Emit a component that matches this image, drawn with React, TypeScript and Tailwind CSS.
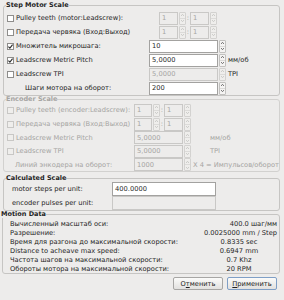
import React from 'react'

const TEXT = 'text-[#1f1f1f]'
const DIM = 'text-[#a5a4a2]'

function Check({ checked, disabled }: { checked?: boolean; disabled?: boolean }) {
  return (
    <span
      className={`w-[7px] h-[7px] border shrink-0 flex items-center justify-center ${
        disabled ? 'border-[#c8c7c5] bg-[#efeeec]' : 'border-[#8e8d8b] bg-white'
      }`}
    >
      {checked && (
        <svg width="5" height="5" viewBox="0 0 5 5">
          <path d="M0.4 2.6 L1.9 4.1 L4.6 0.6" stroke="#2a2a2a" strokeWidth="1.1" fill="none" />
        </svg>
      )}
    </span>
  )
}

function Arrows({ disabled }: { disabled?: boolean }) {
  const c = disabled ? '#c2c1bf' : '#555'
  return (
    <div
      className={`w-[7px] h-full ml-[1px] border rounded-[1px] flex flex-col ${
        disabled ? 'border-[#d3d2d0] bg-[#efeeec]' : 'border-[#c2c1bf] bg-[#f5f4f3]'
      }`}
    >
      <div className="flex-1 flex items-center justify-center">
        <svg width="3" height="2" viewBox="0 0 3 2">
          <path d="M0 2 L1.5 0.3 L3 2" stroke={c} strokeWidth="0.8" fill="none" />
        </svg>
      </div>
      <div className="flex-1 flex items-center justify-center border-t border-[#dcdbd9]">
        <svg width="3" height="2" viewBox="0 0 3 2">
          <path d="M0 0 L1.5 1.7 L3 0" stroke={c} strokeWidth="0.8" fill="none" />
        </svg>
      </div>
    </div>
  )
}

function Spin({ value, disabled, className }: { value: string; disabled?: boolean; className: string }) {
  return (
    <div className={`flex h-[13px] ${className}`}>
      <div
        className={`flex-1 border flex items-center pl-[2px] ${
          disabled ? `border-[#c9c8c6] bg-[#edeceb] ${DIM}` : `border-[#a3a2a0] bg-white ${TEXT}`
        }`}
      >
        {value}
      </div>
      <Arrows disabled={disabled} />
    </div>
  )
}

function Pair({ disabled, a, b, gap }: { disabled?: boolean; a: string; b: string; gap: string }) {
  return (
    <div className="flex items-center">
      <Spin value="1" disabled={disabled} className={a} />
      <span className={`${gap} text-center ${disabled ? DIM : TEXT}`}>:</span>
      <Spin value="1" disabled={disabled} className={b} />
    </div>
  )
}

export default function App() {
  return (
    <div className={`w-[284px] h-[300px] bg-[#edeceb] font-['DejaVu_Sans',sans-serif] text-[6.7px] leading-[8px] ${TEXT} pt-[2px] overflow-hidden`}>
      {/* Step Motor Scale */}
      <fieldset className="ml-[3px] w-[277px] border border-[#c6c5c3] rounded-[3px] pt-[2px]">
        <legend className="ml-[2px] font-bold leading-[7px] text-[6.5px]">Step Motor Scale</legend>
        <div className="flex items-center h-[14px] pl-[3px]">
          <div className="w-[142px] flex items-center gap-[2px]">
            <Check />
            <span>Pulley teeth (motor:Leadscrew):</span>
          </div>
          <div className="w-[78px] flex justify-center">
            <Pair disabled a="w-[27px]" b="w-[27px]" gap="w-[4px]" />
          </div>
        </div>
        <div className="flex items-center h-[14px] pl-[3px]">
          <div className="w-[142px] flex items-center gap-[2px]">
            <Check />
            <span>Передача червяка (Вход:Выход)</span>
          </div>
          <div className="w-[78px] flex justify-center">
            <Pair disabled a="w-[27px]" b="w-[27px]" gap="w-[4px]" />
          </div>
        </div>
        <div className="flex items-center h-[14px] pl-[3px]">
          <div className="w-[142px] flex items-center gap-[2px]">
            <Check checked />
            <span>Множитель микрошага:</span>
          </div>
          <Spin value="10" className="w-[77px]" />
        </div>
        <div className="flex items-center h-[14px] pl-[3px]">
          <div className="w-[142px] flex items-center gap-[2px]">
            <Check checked />
            <span>Leadscrew Metric Pitch</span>
          </div>
          <Spin value="5,0000" className="w-[77px]" />
          <span className="pl-[2px]">мм/об</span>
        </div>
        <div className="flex items-center h-[14px] pl-[3px]">
          <div className="w-[142px] flex items-center gap-[2px]">
            <Check />
            <span>Leadscrew TPI</span>
          </div>
          <Spin value="5,0000" disabled className="w-[77px]" />
          <span className="pl-[2px]">TPI</span>
        </div>
        <div className="flex items-center h-[14px] pl-[3px]">
          <div className="w-[142px] pl-[18px]">Шаги мотора на оборот:</div>
          <Spin value="200" className="w-[77px]" />
        </div>
      </fieldset>

      {/* Encoder Scale */}
      <fieldset className={`ml-[3px] w-[277px] border border-[#d2d1cf] rounded-[3px] ${DIM}`}>
        <legend className="ml-[2px] font-bold leading-[7px] text-[6.5px]">Encoder Scale</legend>
        <div className="flex items-center h-[14px] pl-[3px]">
          <div className="w-[127px] flex items-center gap-[2px]">
            <Check disabled />
            <span>Pulley teeth (encoder:Leadscrew):</span>
          </div>
          <Pair disabled a="w-[26px]" b="w-[27px]" gap="w-[4px]" />
        </div>
        <div className="flex items-center h-[14px] pl-[3px]">
          <div className="w-[127px] flex items-center gap-[2px]">
            <Check disabled />
            <span>Передача червяка (Вход:Выход)</span>
          </div>
          <Pair disabled a="w-[26px]" b="w-[27px]" gap="w-[4px]" />
        </div>
        <div className="flex items-center h-[13px] pl-[3px]">
          <div className="w-[127px] flex items-center gap-[2px]">
            <Check disabled />
            <span>Leadscrew Metric Pitch</span>
          </div>
          <Spin value="5,0000" disabled className="w-[57px]" />
          <span className="pl-[19px]">мм/об</span>
        </div>
        <div className="flex items-center h-[14px] pl-[3px]">
          <div className="w-[127px] flex items-center gap-[2px]">
            <Check disabled />
            <span>Leadscrew TPI</span>
          </div>
          <Spin value="5,0000" disabled className="w-[57px]" />
          <span className="pl-[19px]">TPI</span>
        </div>
        <div className="flex items-center h-[13px] pl-[3px]">
          <div className="w-[127px] pl-[8px]">Линий энкодера на оборот:</div>
          <Spin value="1000" disabled className="w-[57px]" />
          <span className="pl-[2px]">X 4 = Импульсов/оборот</span>
        </div>
      </fieldset>

      {/* Calculated Scale */}
      <fieldset className="ml-[3px] mt-[3px] w-[277px] border border-[#c6c5c3] rounded-[3px]">
        <legend className="ml-[2px] font-bold leading-[7px] text-[6.5px]">Calculated Scale</legend>
        <div className="flex items-center h-[14px]">
          <div className="w-[108px] pl-[8px]">motor steps per unit:</div>
          <div className="w-[104px] h-[14px] border border-[#a3a2a0] bg-white flex items-center pl-[2px]">400.0000</div>
        </div>
        <div className="flex items-center h-[14px]">
          <div className="w-[108px] pl-[8px]">encoder pulses per unit:</div>
          <div className="w-[104px] h-[14px] border border-[#c9c8c6] bg-[#edeceb]" />
        </div>
      </fieldset>

      {/* Motion Data */}
      <fieldset className="ml-[2px] w-[278px] border border-[#c6c5c3] rounded-[3px] pt-[1px]">
        <legend className="ml-[-2px] font-bold leading-[7px] text-[6.5px]">Motion Data</legend>
        {[
          ['Вычисленный масштаб оси:', '400.0 шаг/мм', true],
          ['Разрешение:', '0.0025000 mm / Step', true],
          ['Время для разгона до максимальной скорости:', '0.8335 sec', false],
          ['Distance to acheave max speed:', '0.6947 mm', false],
          ['Частота шагов на максимальной скорости:', '0.7 Khz', false],
          ['Обороты мотора на максимальной скорости:', '20 RPM', false],
        ].map(([label, value, right]) => (
          <div key={label as string} className="flex items-center h-[9px] pl-[7px]">
            <div className="flex-1 whitespace-nowrap">{label}</div>
            <div className={`w-[78px] pr-[2px] whitespace-nowrap ${right ? 'text-right' : 'text-center'}`}>{value}</div>
          </div>
        ))}
      </fieldset>

      <div className="flex justify-end gap-[4px] pr-[7px] mt-[3px]">
        <button className="w-[50px] h-[13px] border border-[#a7a6a4] rounded-[2px] bg-gradient-to-b from-[#fbfbfa] to-[#e2e1df] flex items-center justify-center">
          О<span className="underline">т</span>менить
        </button>
        <button className="w-[50px] h-[13px] border border-[#7f9fc6] rounded-[2px] bg-gradient-to-b from-[#fbfbfa] to-[#e2e1df] flex items-center justify-center">
          <span className="underline">П</span>рименить
        </button>
      </div>
    </div>
  )
}
